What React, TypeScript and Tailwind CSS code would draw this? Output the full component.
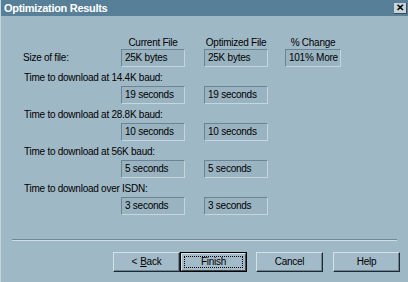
import React from 'react';

type Row = {
  label: string;
  current: string;
  optimized: string;
};

const rows: Row[] = [
  { label: 'Time to download at 14.4K baud:', current: '19 seconds', optimized: '19 seconds' },
  { label: 'Time to download at 28.8K baud:', current: '10 seconds', optimized: '10 seconds' },
  { label: 'Time to download at 56K baud:', current: '5 seconds', optimized: '5 seconds' },
  { label: 'Time to download over ISDN:', current: '3 seconds', optimized: '3 seconds' },
];

function Field({ value, wide = true }: { value: string; wide?: boolean }) {
  return (
    <div
      className={`${wide ? 'w-[64px]' : 'w-[56px]'} h-[18px] flex items-center pl-[3px] border border-t-[#6c8594] border-l-[#6c8594] border-b-[#c4d6df] border-r-[#c4d6df] bg-[#9ab3c1] leading-none`}
    >
      {value}
    </div>
  );
}

function Button({ children, primary = false }: { children: React.ReactNode; primary?: boolean }) {
  if (primary) {
    return (
      <div className="w-[67px] h-[20px] border border-black">
        <div className="h-full border border-t-[#d3e1e8] border-l-[#d3e1e8] border-b-[#3c4a52] border-r-[#3c4a52] bg-[#a3bbc8] p-[2px]">
          <div className="h-full flex items-center justify-center border border-dotted border-black leading-none">
            {children}
          </div>
        </div>
      </div>
    );
  }
  return (
    <div className="w-[67px] h-[20px] flex items-center justify-center border border-t-[#d3e1e8] border-l-[#d3e1e8] border-b-[#1f2a30] border-r-[#1f2a30] bg-[#a3bbc8] shadow-[inset_-1px_-1px_0_#6c8594] leading-none">
      {children}
    </div>
  );
}

export default function App() {
  return (
    <div
      className="w-[408px] h-[282px] bg-[#9fb8c6] text-black text-[10px] tracking-[-0.25px] flex flex-col overflow-hidden border-l border-l-[#c3d5de]"
      style={{ fontFamily: '"Liberation Sans", Arial, sans-serif' }}
    >
      {/* Title bar */}
      <div className="h-[16px] bg-[#577f97] flex items-center justify-between pl-[3px] pr-[1px]">
        <span className="text-white font-bold text-[11px] tracking-[-0.3px] leading-none">Optimization Results</span>
        <div className="w-[13px] h-[11px] bg-[#c9d5dc] border-r border-b border-[#3d4c55] flex items-center justify-center text-[10px] font-bold leading-none">
          ✕
        </div>
      </div>

      {/* Column headers */}
      <div className="flex mt-[20px] h-[13px] items-center leading-none">
        <div className="w-[120px]" />
        <div className="w-[64px] text-center">Current File</div>
        <div className="w-[19px]" />
        <div className="w-[64px] text-center">Optimized File</div>
        <div className="w-[17px]" />
        <div className="w-[56px] text-center">% Change</div>
      </div>

      {/* Size row */}
      <div className="flex items-center">
        <div className="w-[120px] pl-[22px] leading-none">Size of file:</div>
        <Field value="25K bytes" />
        <div className="w-[19px]" />
        <Field value="25K bytes" />
        <div className="w-[17px]" />
        <Field value="101% More" wide={false} />
      </div>

      {/* Download time rows */}
      <div className="flex flex-col gap-[4px] mt-[4px]">
        {rows.map((r) => (
          <div key={r.label}>
            <div className="h-[13px] flex items-center pl-[23px] leading-none">{r.label}</div>
            <div className="flex mt-[2px]">
              <div className="w-[120px]" />
              <Field value={r.current} />
              <div className="w-[19px]" />
              <Field value={r.optimized} />
            </div>
          </div>
        ))}
      </div>

      {/* Separator */}
      <div className="mt-[24px] mx-[11px] border-t border-t-[#6f8896] border-b border-b-[#cddde5]" />

      {/* Buttons */}
      <div className="flex mt-[11px] pl-[112px]">
        <Button>
          &lt; <span className="underline ml-[3px]">B</span>ack
        </Button>
        <Button primary>Finish</Button>
        <div className="w-[9px]" />
        <Button>Cancel</Button>
        <div className="w-[10px]" />
        <Button>Help</Button>
      </div>
    </div>
  );
}
